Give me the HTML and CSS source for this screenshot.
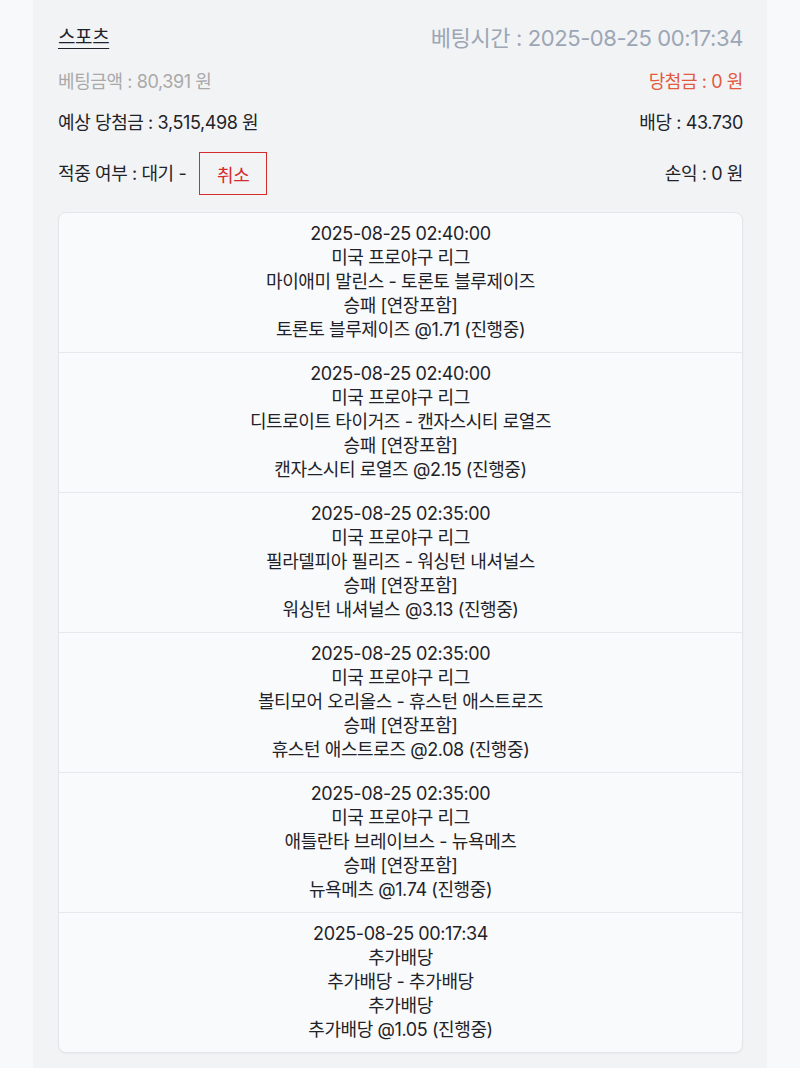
FILE: index.html
```html
<!DOCTYPE html>
<html lang="ko">
<head>
    <meta charset="UTF-8">
    <meta name="viewport" content="width=device-width, initial-scale=1.0">
    <title>베팅내역</title>
    <link rel="stylesheet" href="styles.css">
</head>
<body>
    <div class="panel">
        <div class="row head">
            <a class="category">스포츠</a>
            <span class="bet-time">베팅시간 : 2025-08-25 00:17:34</span>
        </div>
        <div class="row">
            <span class="muted">베팅금액 : 80,391 원</span>
            <span class="win">당첨금 : 0 원</span>
        </div>
        <div class="row">
            <span>예상 당첨금 : 3,515,498 원</span>
            <span>배당 : 43.730</span>
        </div>
        <div class="row">
            <span class="status">적중 여부 : 대기 - <button class="cancel">취소</button></span>
            <span>손익 : 0 원</span>
        </div>

        <div class="card">
            <div class="game">
                <div>2025-08-25 02:40:00</div>
                <div>미국 프로야구 리그</div>
                <div>마이애미 말린스 - 토론토 블루제이즈</div>
                <div>승패 [연장포함]</div>
                <div>토론토 블루제이즈 @1.71 (진행중)</div>
            </div>
            <div class="game">
                <div>2025-08-25 02:40:00</div>
                <div>미국 프로야구 리그</div>
                <div>디트로이트 타이거즈 - 캔자스시티 로열즈</div>
                <div>승패 [연장포함]</div>
                <div>캔자스시티 로열즈 @2.15 (진행중)</div>
            </div>
            <div class="game">
                <div>2025-08-25 02:35:00</div>
                <div>미국 프로야구 리그</div>
                <div>필라델피아 필리즈 - 워싱턴 내셔널스</div>
                <div>승패 [연장포함]</div>
                <div>워싱턴 내셔널스 @3.13 (진행중)</div>
            </div>
            <div class="game">
                <div>2025-08-25 02:35:00</div>
                <div>미국 프로야구 리그</div>
                <div>볼티모어 오리올스 - 휴스턴 애스트로즈</div>
                <div>승패 [연장포함]</div>
                <div>휴스턴 애스트로즈 @2.08 (진행중)</div>
            </div>
            <div class="game">
                <div>2025-08-25 02:35:00</div>
                <div>미국 프로야구 리그</div>
                <div>애틀란타 브레이브스 - 뉴욕메츠</div>
                <div>승패 [연장포함]</div>
                <div>뉴욕메츠 @1.74 (진행중)</div>
            </div>
            <div class="game">
                <div>2025-08-25 00:17:34</div>
                <div>추가배당</div>
                <div>추가배당 - 추가배당</div>
                <div>추가배당</div>
                <div>추가배당 @1.05 (진행중)</div>
            </div>
        </div>
    </div>
</body>
</html>
```

FILE: styles.css
```css
body {
    margin: 0;
    background-color: #f8f9fb;
    font-family: Inter, "Noto Sans CJK KR", sans-serif;
    font-size: 18px;
    color: #1f2329;
    letter-spacing: -0.4px;
}

.panel {
    margin: 0 33px;
    min-height: 1068px;
    box-sizing: border-box;
    padding: 24px 24px 20px 25px;
    background-color: #f2f3f5;
    display: flex;
    flex-direction: column;
    gap: 17px;
}

.row {
    display: flex;
    justify-content: space-between;
    align-items: center;
    line-height: 24px;
}

.row.head {
    line-height: 28px;
    margin-bottom: 1px;
}

.category {
    font-size: 19px;
    color: #1f2329;
    text-decoration: underline;
    text-underline-offset: 4px;
}

.bet-time {
    font-size: 22px;
    color: #9ca6b5;
}

.muted {
    color: #a9a9a9;
}

.win {
    color: #e25a40;
}

.status {
    display: flex;
    align-items: center;
    gap: 13px;
}

.cancel {
    width: 68px;
    height: 43px;
    border: 1.5px solid #d52b2b;
    background: transparent;
    color: #d52b2b;
    font-family: inherit;
    font-size: 18px;
    letter-spacing: -0.4px;
    padding: 0;
}

.card {
    background-color: #f9fafb;
    border: 1px solid #e3e5e9;
    border-radius: 8px;
    box-shadow: 0 1px 2px rgba(0, 0, 0, 0.04);
}

.game {
    text-align: center;
    line-height: 24px;
    padding: 9px 0 10px;
    border-bottom: 1px solid #e6e8eb;
}

.game:last-child {
    border-bottom: none;
}
```
